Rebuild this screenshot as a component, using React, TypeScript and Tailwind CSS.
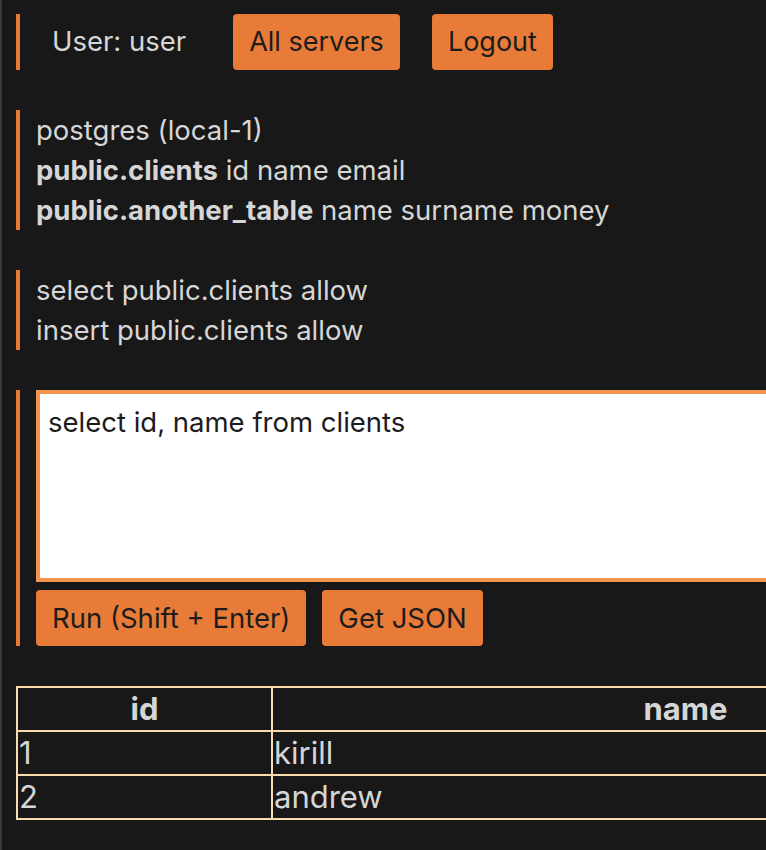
const rows = [
  { id: '1', name: 'kirill' },
  { id: '2', name: 'andrew' },
];

function Button({ children, big }: { children: React.ReactNode; big?: boolean }) {
  return (
    <button
      className={
        'h-[56px] rounded-[4px] bg-[#e97b38] px-4 leading-[32px] text-[#1c1c1c] ' +
        (big ? 'text-[27.5px]' : 'text-[27px]')
      }
    >
      {children}
    </button>
  );
}

export default function App() {
  return (
    <div
      className="h-[850px] w-full overflow-hidden border-l-2 border-[#3a3a3a] bg-[#181818] text-[27.5px] text-[#d6d6d6]"
      style={{ fontFamily: 'Inter, "Noto Sans", sans-serif' }}
    >
      <div className="w-[1200px] px-[14px] pt-[14px]">
        <div className="flex items-center border-l-4 border-[#e97b38]">
          <span className="ml-8 mr-[47px]">User: user</span>
          <Button>All servers</Button>
          <span className="w-8" />
          <Button>Logout</Button>
        </div>

        <div className="mt-10 border-l-4 border-[#e97b38] pl-4 leading-[40px]">
          <div>postgres (local-1)</div>
          <div>
            <b>public.clients</b> id name email
          </div>
          <div>
            <b>public.another_table</b> name surname money
          </div>
        </div>

        <div className="mt-10 border-l-4 border-[#e97b38] pl-4 leading-[40px]">
          <div>select public.clients allow</div>
          <div>insert public.clients allow</div>
        </div>

        <div className="mt-10 flex flex-col gap-2 border-l-4 border-[#e97b38] pl-4">
          <textarea
            className="h-[192px] w-[1000px] resize-none border-4 border-[#f0944e] bg-white px-2 py-[12px] text-[27.5px] leading-[32px] text-[#1c1c1c] outline-none"
            defaultValue="select id, name from clients"
          />
          <div className="flex gap-4">
            <Button big>Run (Shift + Enter)</Button>
            <Button big>Get JSON</Button>
          </div>
        </div>

        <table className="mt-10 w-[1084px] border-collapse border-2 border-[#fcdcae] text-[31px] leading-[42px]">
          <thead>
            <tr>
              <th className="w-[255px] border-2 border-[#fcdcae] font-bold">id</th>
              <th className="border-2 border-[#fcdcae] font-bold">name</th>
            </tr>
          </thead>
          <tbody>
            {rows.map((r) => (
              <tr key={r.id}>
                <td className="border-2 border-[#fcdcae] px-[1px]">{r.id}</td>
                <td className="border-2 border-[#fcdcae] px-[1px]">{r.name}</td>
              </tr>
            ))}
          </tbody>
        </table>
      </div>
    </div>
  );
}
